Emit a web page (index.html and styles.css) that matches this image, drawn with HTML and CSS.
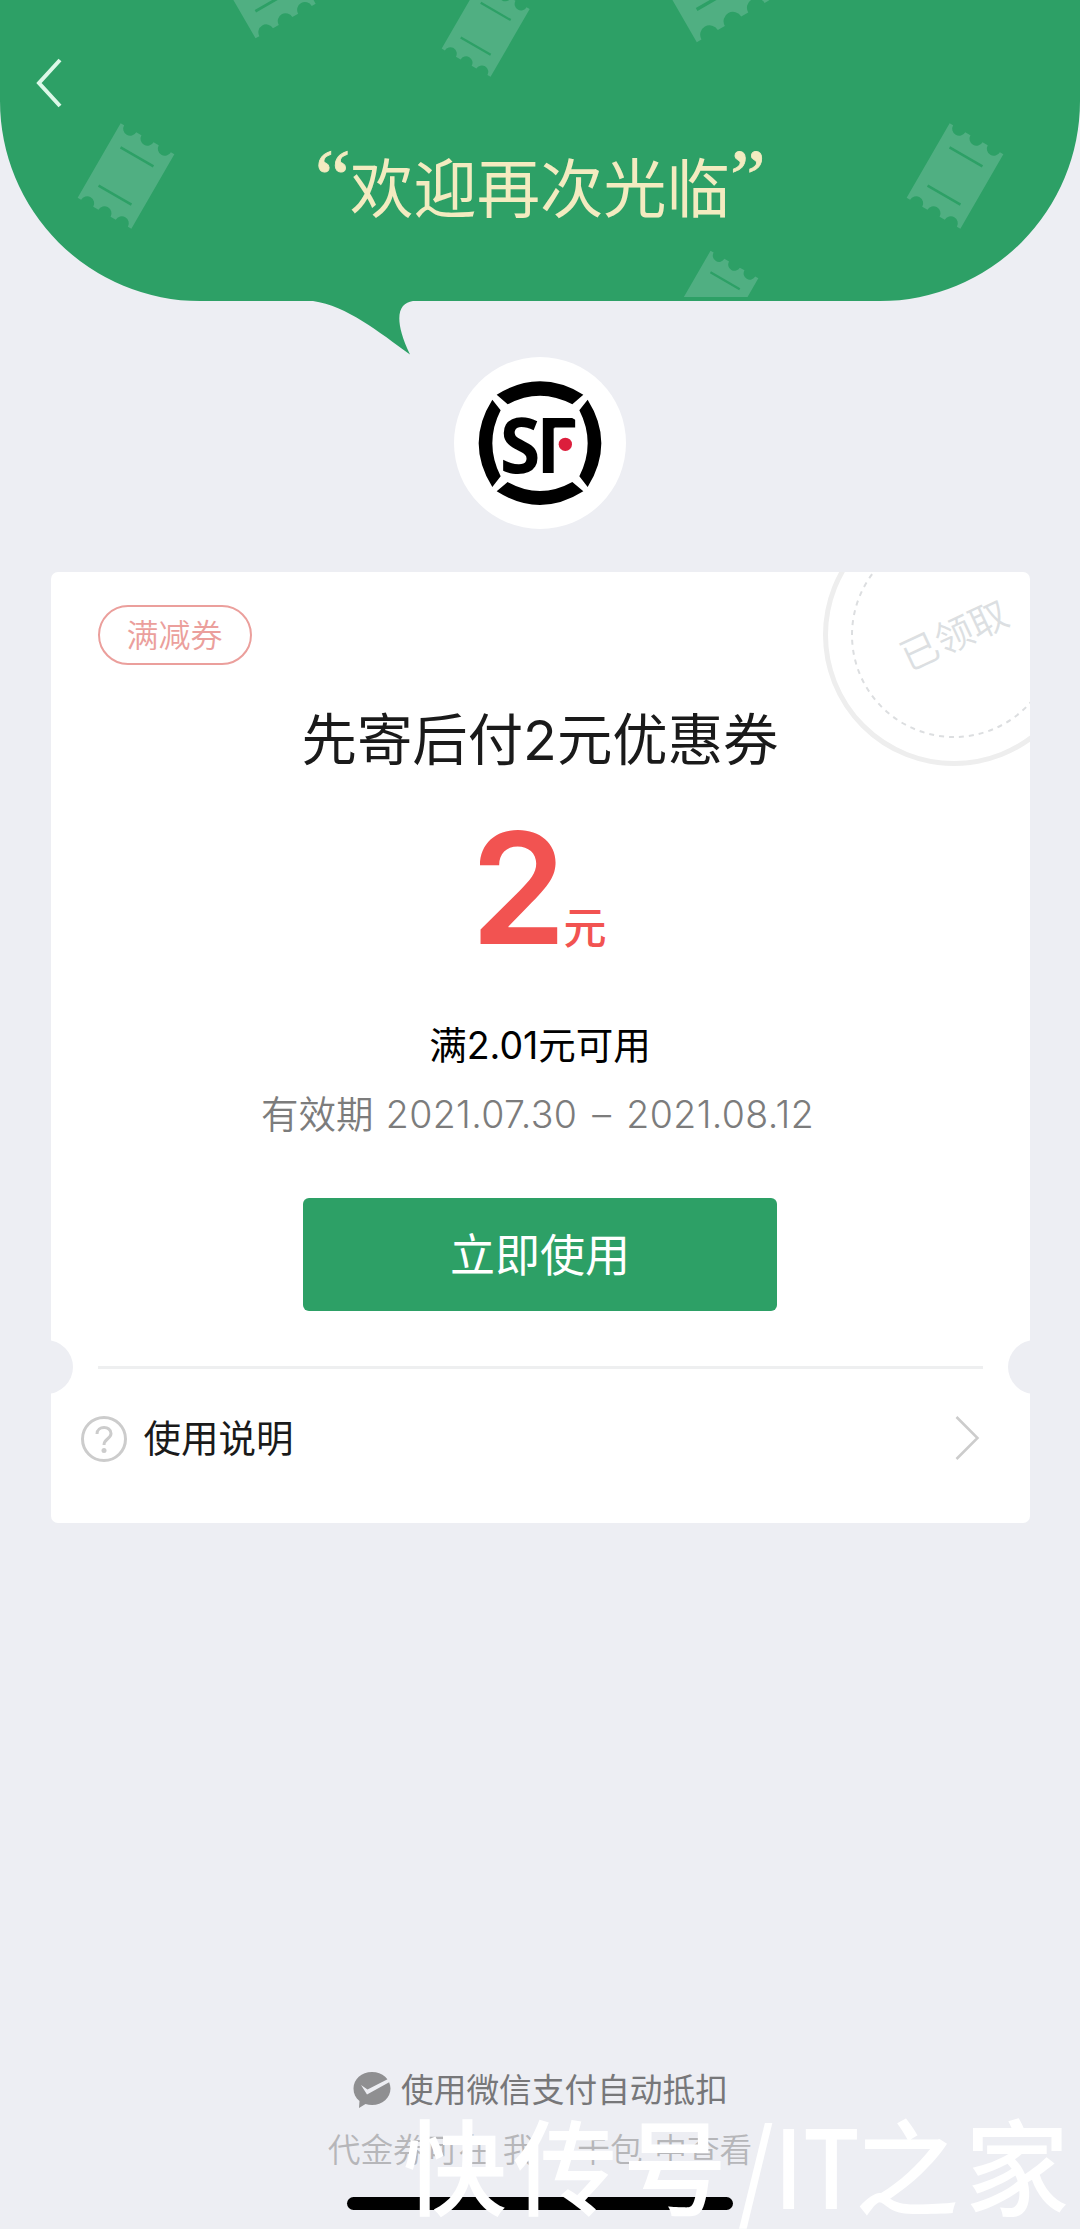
FILE: index.html
```html
<!DOCTYPE html>
<html lang="zh-CN">
<head>
<meta charset="utf-8">
<title>先寄后付2元优惠券</title>
<link rel="stylesheet" href="styles.css">
</head>
<body>
<div class="page">
  <header class="hero">
    <svg class="hero-art" width="1080" height="360" viewBox="0 0 1080 360" aria-hidden="true">
      <defs>
        <g id="ticket">
          <path class="ticket-body" d="M-31-43h4a7 7 0 0 0 14 0h6a7 7 0 0 0 14 0h6a7 7 0 0 0 14 0h4v86h-4a7 7 0 0 0-14 0h-6a7 7 0 0 0-14 0h-6a7 7 0 0 0-14 0h-4z"/>
          <path class="ticket-line" d="M-19-22h38M-19 22h38"/>
        </g>
        <clipPath id="hero-clip"><rect width="1080" height="297"/></clipPath>
      </defs>
      <path class="bubble" d="M0 0H1080V101A200 200 0 0 1 880 301H413C398 303 393 319 410 354.500C379 332 347 306 313 301H200A200 200 0 0 1 0 101Z"/>
      <g clip-path="url(#hero-clip)">
        <use href="#ticket" transform="translate(126 176) rotate(30)"/>
        <use href="#ticket" transform="translate(955 176) rotate(30)"/>
        <use href="#ticket" transform="translate(715.300 297.700) rotate(30) scale(.89)"/>
        <use href="#ticket" transform="translate(485.700 28.800) rotate(30) scale(.91)"/>
        <use href="#ticket" transform="translate(261.500 -20.700) rotate(-30) scale(1.120)"/>
        <use href="#ticket" transform="translate(704 -29) rotate(-30) scale(1.350)"/>
      </g>
    </svg>
    <svg class="back" width="30" height="52" viewBox="0 0 30 52" aria-label="返回"><path d="M27 3L6 26L27 49"/></svg>
    <h1 class="welcome"><span class="quote">“</span>欢迎再次光临<span class="quote">”</span></h1>
  </header>

  <div class="logo">
    <svg width="172" height="172" viewBox="42 50 516 516" aria-label="SF">
      <path d="M170 163Q300 83 430 163L397 192Q300 140 203 192ZM170 453Q300 535 430 453L397 425Q300 479 203 425ZM157 178Q75 308 157 440L182 408Q132 308 182 210ZM443 178Q525 308 443 440L418 408Q468 308 418 210Z"/>
      <text class="logo-text" x="179" y="397" textLength="122" lengthAdjust="spacingAndGlyphs">S</text>
      <text class="logo-text" x="287" y="397" textLength="130" lengthAdjust="spacingAndGlyphs">F</text>
      <path class="logo-mask" d="M341 264h79v138h-79zM368 224Q398 230 416 246V224Z"/>
      <circle class="logo-dot" cx="376" cy="312" r="20"/>
    </svg>
  </div>

  <main class="card">
    <svg class="stamp" width="262" height="262" viewBox="0 0 262 262">
      <circle class="stamp-ring" cx="131" cy="131" r="128.500"/>
      <circle class="stamp-dash" cx="131" cy="131" r="102"/>
      <text class="stamp-text" x="131" y="145" transform="rotate(-25 131 131)">已领取</text>
    </svg>
    <section class="coupon">
      <span class="tag">满减券</span>
      <h2 class="title">先寄后付<span class="num">2</span>元优惠券</h2>
      <div class="amount"><span class="value">2</span><span class="unit">元</span></div>
      <p class="condition">满<span class="num">2.01</span>元可用</p>
      <p class="validity">有效期 <span class="num">2021.07.30 – 2021.08.12</span></p>
      <button class="use">立即使用</button>
    </section>
    <div class="divider"></div>
    <a class="help">
      <svg width="46" height="46" viewBox="0 0 46 46" aria-hidden="true">
        <circle cx="23" cy="23" r="21.500"/>
        <path d="M16 18C16 9.500 30 9.500 30 17.500C30 23 23 22.500 23 29"/>
        <circle class="help-dot" cx="23" cy="34.500" r="2.500"/>
      </svg>
      <span>使用说明</span>
      <svg class="chevron" width="26" height="46" viewBox="0 0 26 46" aria-hidden="true"><path d="M2.500 1L23.500 22L2.500 43"/></svg>
    </a>
  </main>

  <footer class="footer">
    <p class="pay">
      <svg width="40" height="38" viewBox="0 0 40 38" aria-hidden="true">
        <path class="pay-bubble" d="M20 1C30.500 1 38.500 8.300 38.500 17.500S30.500 34 20 34Q16.500 34 13.500 33L7 37L7.500 30C3.500 27 1.500 22.500 1.500 17.500C1.500 8.300 9.500 1 20 1Z"/>
        <path class="pay-check" d="M9 14L15.500 18.500L37 7.500L38.500 10.500L15 23.500Z"/>
      </svg>
      <span>使用微信支付自动抵扣</span>
    </p>
    <p class="where">代金券可在 我 <span class="dash">–</span> 卡包 中查看</p>
    <div class="home-bar"></div>
  </footer>
  <div class="watermark"><span>快传号</span><span class="latin">/IT</span><span>之家</span></div>
</div>
</body>
</html>
```
FILE: styles.css
```css
* { box-sizing: border-box; margin: 0; padding: 0; }

body {
  background: #edeef3;
  font-family: "Noto Sans CJK SC", sans-serif;
  color: #1a1a1a;
}

.page {
  position: relative;
  width: 1080px;
  height: 2229px;
  overflow: hidden;
  display: flex;
  flex-direction: column;
  align-items: center;
}

.num { font-family: Inter, sans-serif; }

.hero {
  position: relative;
  width: 100%;
  height: 301px;
  padding: 57px 33px 0;
}
.hero-art { position: absolute; left: 0; top: 0; }
.bubble { fill: #2da066; }
.ticket-body { fill: #50af82; }
.ticket-line { stroke: #2da066; stroke-width: 2.500; }
.back { display: block; position: relative; fill: none; stroke: #dcf8e8; stroke-width: 4; }
.welcome {
  position: relative;
  height: 90px;
  margin-top: 31px;
  display: flex;
  justify-content: center;
  font-size: 63.300px;
  line-height: 90px;
  font-weight: 400;
  color: #f3ebc0;
}
.quote { width: 35px; font: 80px/77px "Liberation Serif", serif; -webkit-text-stroke: .8px #f3ebc0; }

.logo {
  width: 172px;
  height: 172px;
  margin-top: 56px;
  border-radius: 50%;
  background: #fff;
}
.logo svg { display: block; }
.logo-text { font: 700 230px "Open Sans", sans-serif; }
.logo-mask { fill: #fff; }
.logo-dot { fill: #dc1e3c; }

.card {
  position: relative;
  width: 979px;
  height: 951px;
  margin-top: 43px;
  border-radius: 7px;
  overflow: hidden;
  background: #fff;
}
/* side notches of the voucher */
.card::before, .card::after {
  content: "";
  position: absolute;
  top: 768px;
  width: 54px;
  height: 54px;
  border-radius: 50%;
  background: #edeef3;
}
.card::before { left: -32px; }
.card::after { right: -32px; }

.stamp { position: absolute; left: 772px; top: -68px; }
.stamp-ring { fill: none; stroke: #eee; stroke-width: 5; }
.stamp-dash { fill: none; stroke: #dcdee0; stroke-width: 2; stroke-dasharray: 5 5; }
.stamp-text { font-size: 38px; font-weight: 350; fill: #dcdfe2; text-anchor: middle; }

.coupon {
  height: 794px;
  padding: 33px 47px 0;
  display: flex;
  flex-direction: column;
  align-items: center;
}
.tag {
  align-self: flex-start;
  width: 154px;
  height: 60px;
  border: 2.500px solid #eb9f9c;
  border-radius: 30px;
  text-align: center;
  font-size: 32px;
  line-height: 52px;
  font-weight: 350;
  color: #eb9f9c;
}
.title { margin-top: 31px; font-size: 55.400px; line-height: 80px; font-weight: 400; }
.amount {
  height: 150px;
  margin: 33px 3px 0 0;
  display: flex;
  align-items: baseline;
  gap: 1px;
  color: #f25351;
}
.value { font: 600 154px/150px Inter, sans-serif; letter-spacing: -4px; }
.unit { font-size: 43px; line-height: 50px; font-weight: 500; }
.condition { margin-top: 52px; font-size: 37.500px; line-height: 56px; color: #000; }
.validity {
  margin: 10px 5px 0 0;
  font-size: 37.500px;
  line-height: 56px;
  font-weight: 350;
  color: #7c7c7c;
  white-space: pre;
  word-spacing: 4px;
}
.validity .num { letter-spacing: .38px; }
.use {
  width: 474px;
  height: 113px;
  margin-top: 55px;
  padding-bottom: 4px;
  border: 0;
  border-radius: 6px;
  background: #2da066;
  color: #fff;
  font: 400 45px/109px "Noto Sans CJK SC", sans-serif;
}

.divider { height: 3px; margin: 0 47px; background: #eeeff0; }
.help {
  height: 140px;
  padding: 0 50px 0 30px;
  display: flex;
  align-items: center;
  font-size: 37.500px;
}
.help svg { fill: none; stroke: #ccc; stroke-width: 3; }
.help span { margin: 0 0 7px 17px; }
.help .help-dot { fill: #ccc; stroke: none; }
.help .chevron { margin-left: auto; stroke-width: 2.500; }

.footer {
  width: 100%;
  margin-top: 540px;
  display: flex;
  flex-direction: column;
  align-items: center;
}
.pay {
  display: flex;
  align-items: center;
  gap: 9px;
  height: 54px;
  font-size: 32.700px;
  color: #777779;
}
.pay span { margin-bottom: 5px; }
.pay-bubble { fill: #8f8f91; }
.pay-check { fill: #edeef3; }
.where {
  margin-top: 4px;
  font-size: 32.700px;
  line-height: 54px;
  font-weight: 350;
  color: #b6b6b9;
  word-spacing: 4.200px;
}
.dash { display: inline-block; width: 19px; }
.home-bar { width: 386px; height: 13px; margin-top: 22px; border-radius: 7px; background: #000; }

.watermark {
  position: absolute;
  left: 403px;
  top: 2093px;
  display: flex;
  font-size: 104px;
  line-height: 139px;
  font-weight: 500;
  letter-spacing: 6px;
  color: #fff;
  white-space: nowrap;
}
.latin {
  width: 117px;
  margin-left: 5px;
  font-size: 108px;
  letter-spacing: 0;
  transform: scaleX(.86);
  transform-origin: left;
}
```
